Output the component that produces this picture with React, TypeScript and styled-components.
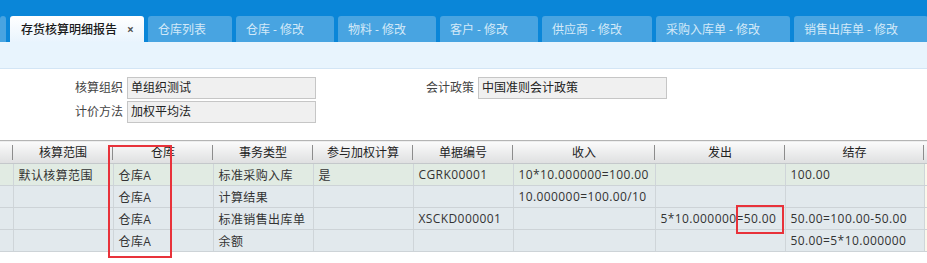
import React from "react";
import styled, { createGlobalStyle } from "styled-components";

const Global = createGlobalStyle`
  html, body { margin: 0; padding: 0; background: #fff; }
  body { font-family: "Open Sans", "Noto Sans CJK SC", "Noto Sans", sans-serif; font-size: 12px; color: #333; }
`;

const Page = styled.div`
  position: relative;
  width: 927px;
  height: 263px;
  overflow: hidden;
`;

const TabBar = styled.div`
  height: 42px;
  background: #0a86d8;
  display: flex;
  align-items: flex-end;
  gap: 4px;
  overflow: hidden;
`;

const Tab = styled.div<{ $active?: boolean; $w: number }>`
  flex: 0 0 ${(p) => p.$w}px;
  height: 26px;
  box-sizing: border-box;
  border-radius: 3px 3px 0 0;
  display: flex;
  align-items: center;
  padding-left: ${(p) => (p.$active ? 11 : 10)}px;
  font-size: 12px;
  white-space: nowrap;
  color: ${(p) => (p.$active ? "#1a1a1a" : "#d3e9f8")};
  font-weight: ${(p) => (p.$active ? 500 : 400)};
  background: ${(p) =>
    p.$active ? "linear-gradient(#ffffff, #e9f4fd)" : "#48a4e1"};
`;

const Close = styled.span`
  margin-left: 10px;
  font-size: 12px;
  color: #555;
  font-weight: 700;
`;

const SubBar = styled.div`
  height: 26px;
  background: #e8f4fd;
  border-bottom: 1px solid #d3e5f5;
`;

const Form = styled.div`
  display: grid;
  grid-template-columns: 123px 189px 154px 189px;
  column-gap: 4px;
  row-gap: 2px;
  padding-top: 8px;
`;

const Label = styled.div`
  height: 22px;
  line-height: 22px;
  text-align: right;
  color: #444;
`;

const Field = styled.div`
  height: 22px;
  box-sizing: border-box;
  border: 1px solid #c6c6c6;
  background: #f0f0f0;
  line-height: 20px;
  padding-left: 3px;
  color: #222;
`;

const Empty = styled.div``;

const TableWrap = styled.div`
  margin-top: 17px;
`;

const Table = styled.table`
  border-collapse: collapse;
  table-layout: fixed;
  width: 927px;
`;

const Th = styled.th`
  height: 22px;
  padding: 0;
  font-weight: 400;
  color: #222;
  text-align: center;
  background: linear-gradient(#fbfbfb, #dedfe0);
  border-top: 1px solid #b4b4b4;
  border-bottom: 1px solid #c4c8cb;
  position: relative;
  &::after {
    content: "";
    position: absolute;
    right: 0;
    top: 4px;
    bottom: 3px;
    width: 1px;
    background: #8c8c8c;
  }
  &:last-child::after { display: none; }
`;

const Tr = styled.tr<{ $first?: boolean }>`
  background: ${(p) => (p.$first ? "#e1ebe3" : "#e2e9ed")};
`;

const Td = styled.td<{ $tail?: boolean }>`
  height: 21px;
  padding: 0 0 0 5px;
  white-space: nowrap;
  overflow: hidden;
  letter-spacing: 0.4px;
  color: #333;
  border-right: 1px solid #cfd5d9;
  border-bottom: 1px solid #cdd3d7;
  ${(p) => (p.$tail ? "background: #fbf8ec; border-right: none; padding: 0;" : "")}
`;

const Mark = styled.div`
  position: absolute;
  border: 2px solid #e8323a;
  box-sizing: border-box;
`;

const tabs = [
  { t: "", w: 6 },
  { t: "存货核算明细报告", w: 134, active: true },
  { t: "仓库列表", w: 84 },
  { t: "仓库 - 修改", w: 98 },
  { t: "物料 - 修改", w: 98 },
  { t: "客户 - 修改", w: 98 },
  { t: "供应商 - 修改", w: 110 },
  { t: "采购入库单 - 修改", w: 134 },
  { t: "销售出库单 - 修改", w: 134 },
];

const cols = [13, 100, 100, 100, 100, 100, 142, 130, 139, 3];
const heads = ["", "核算范围", "仓库", "事务类型", "参与加权计算", "单据编号", "收入", "发出", "结存", ""];
const rows = [
  ["", "默认核算范围", "仓库A", "标准采购入库", "是", "CGRK00001", "10*10.000000=100.00", "", "100.00"],
  ["", "", "仓库A", "计算结果", "", "", "10.000000=100.00/10", "", ""],
  ["", "", "仓库A", "标准销售出库单", "", "XSCKD000001", "", "5*10.000000=50.00", "50.00=100.00-50.00"],
  ["", "", "仓库A", "余额", "", "", "", "", "50.00=5*10.000000"],
];

export default function App() {
  return (
    <Page>
      <Global />
      <TabBar>
        {tabs.map((t, i) => (
          <Tab key={i} $active={t.active} $w={t.w} style={i === 0 ? { padding: 0 } : undefined}>
            {t.t}
            {t.active && <Close>×</Close>}
          </Tab>
        ))}
      </TabBar>
      <SubBar />
      <Form>
        <Label>核算组织</Label>
        <Field>单组织测试</Field>
        <Label>会计政策</Label>
        <Field>中国准则会计政策</Field>
        <Label>计价方法</Label>
        <Field>加权平均法</Field>
        <Empty />
        <Empty />
      </Form>
      <TableWrap>
        <Table>
          <colgroup>
            {cols.map((w, i) => (
              <col key={i} style={{ width: w }} />
            ))}
          </colgroup>
          <thead>
            <tr>
              {heads.map((h, i) => (
                <Th key={i}>{h}</Th>
              ))}
            </tr>
          </thead>
          <tbody>
            {rows.map((r, ri) => (
              <Tr key={ri} $first={ri === 0}>
                {r.map((c, ci) => (
                  <Td key={ci} style={ci === 0 ? { padding: 0 } : undefined}>
                    {c}
                  </Td>
                ))}
                <Td $tail />
              </Tr>
            ))}
          </tbody>
        </Table>
      </TableWrap>
      <Mark style={{ left: 108, top: 145, width: 64, height: 113 }} />
      <Mark style={{ left: 736, top: 205, width: 48, height: 29 }} />
    </Page>
  );
}
